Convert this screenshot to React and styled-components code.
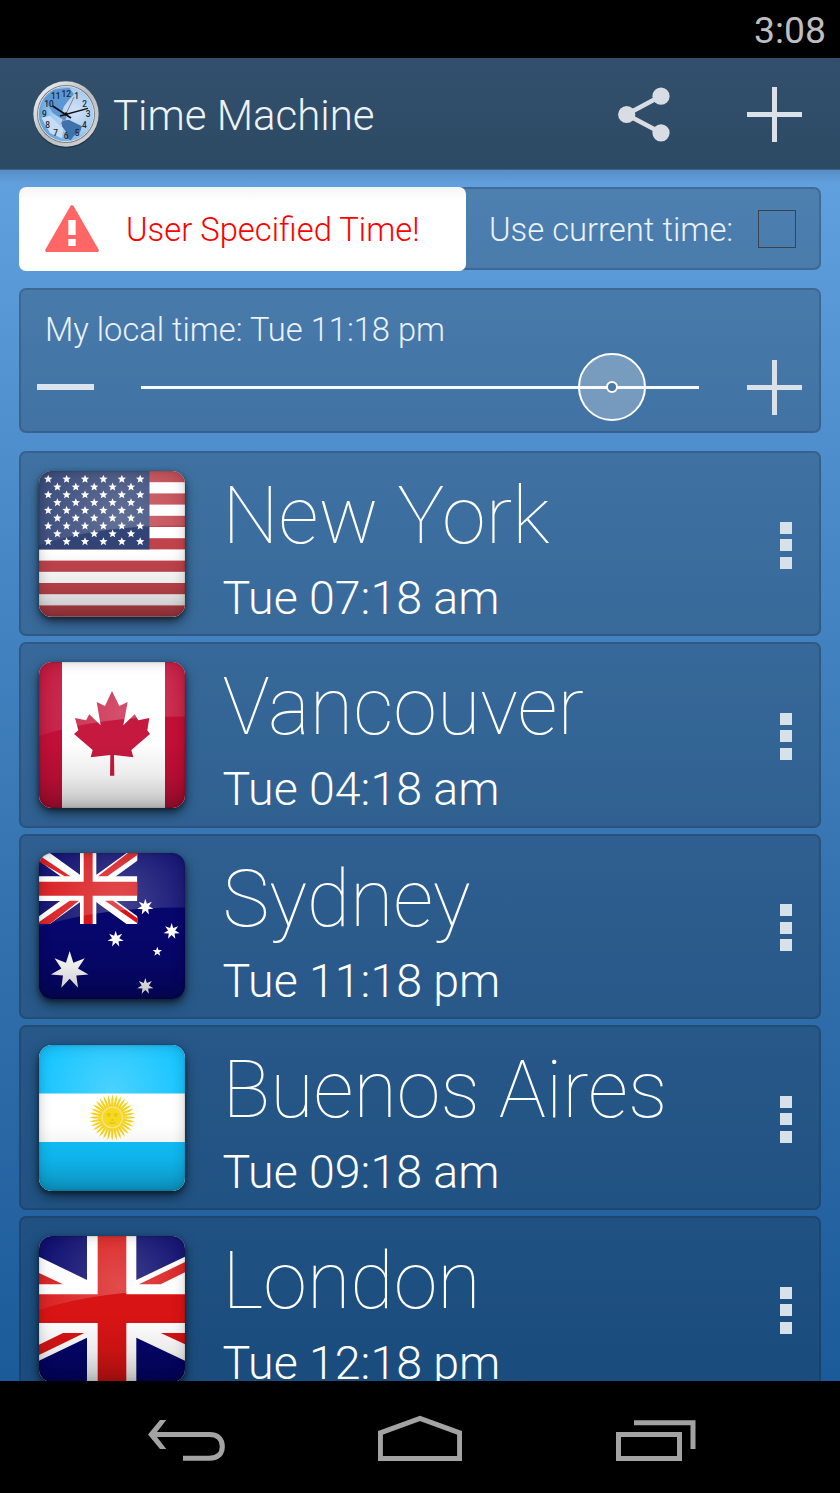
import { useState } from 'react';
import styled, { createGlobalStyle } from 'styled-components';

const GlobalStyle = createGlobalStyle`
    *, *::after {
        box-sizing: border-box;
    }
    body {
        margin: 0;
        background: #000;
    }
`

const Screen = styled.div`
    width: 840px;
    height: 1493px;
    display: flex;
    flex-direction: column;
    overflow: hidden;
    background: #000;
    color: #fff;
    font-family: Roboto, "Liberation Sans", sans-serif;
    font-weight: 300;
`

const StatusBar = styled.div`
    flex: none;
    height: 58px;
    display: flex;
    justify-content: flex-end;
    align-items: center;
    padding: 2px 14px 0 0;
    font-size: 37.3px;
    font-weight: 400;
    color: #bebebe;
`

const ActionBar = styled.header`
    flex: none;
    height: 112px;
    display: flex;
    align-items: center;
    padding: 2px 38px 0 32px;
    background: linear-gradient(#32506d, #2d4a64);
    border-bottom: 1px solid #3f6181;
`

const Title = styled.h1`
    flex: 1;
    margin: 0;
    padding: 3px 0 0 13px;
    font-size: 42px;
    font-weight: 300;
    line-height: 50px;
    color: #eef2f5;
`

const IconButton = styled.button`
    display: flex;
    padding: 0;
    border: 0;
    background: none;
    cursor: pointer;
    margin-right: ${props => props.$gap || 0}px;
`

const Content = styled.main`
    flex: none;
    height: 1211px;
    display: flex;
    flex-direction: column;
    padding: 17px 19px 0;
    overflow: hidden;
    background:
        linear-gradient(rgba(0, 0, 0, 0.12), rgba(0, 0, 0, 0) 14px),
        linear-gradient(#62a1df 0%, #4b8bc9 27%, #3370ae 62%, #1c5b9a 100%);
`

const Panel = styled.section`
    flex: none;
    background: rgba(20, 30, 40, 0.25);
    border: 2px solid rgba(20, 30, 40, 0.2);
    border-radius: 7px;
`

const ModePanel = styled(Panel)`
    height: 83px;
    display: flex;
    align-items: center;
    margin-bottom: 18px;
`

const Warning = styled.div`
    flex: none;
    width: 447px;
    height: 84px;
    margin-left: -2px;
    display: flex;
    align-items: center;
    gap: 27px;
    padding-left: 26px;
    border-radius: 7px;
    background: linear-gradient(#f5f5f5, #fff 14px);
    color: #f00;
    font-size: 32.8px;
`

const WarningText = styled.span`
    padding-top: 2px;
`

const CurrentLabel = styled.label`
    flex: 1;
    display: flex;
    align-items: center;
    justify-content: space-between;
    padding: 2px 23px 0 23px;
    font-size: 32.8px;
    color: #eaf1f8;
`

const CheckBox = styled.span`
    width: 38px;
    height: 38px;
    margin-top: -2px;
    border: 1.5px solid #3b444d;
`

const TimePanel = styled(Panel)`
    height: 145px;
    margin-bottom: 18px;
    padding: 20px 17px 0 16px;
`

const LocalTime = styled.div`
    padding-left: 8px;
    font-size: 32.67px;
    line-height: 40px;
    color: #eaf1f8;
`

const SliderRow = styled.div`
    display: flex;
    align-items: center;
    height: 56px;
    margin-top: 9px;
`

const Minus = styled.span`
    width: 57px;
    height: 6px;
    background: #dbe4ee;
`

const Track = styled.div`
    position: relative;
    width: 558px;
    height: 3px;
    margin: 0 48px 0 47px;
    background: #f6f9fc;
`

const Thumb = styled.div`
    position: absolute;
    top: 50%;
    width: 68px;
    height: 68px;
    transform: translate(-50%, -50%);
    display: flex;
    align-items: center;
    justify-content: center;
    border: 2.4px solid #fff;
    border-radius: 50%;
    background: rgba(255, 255, 255, 0.28);

    &::after {
        content: '';
        width: 12px;
        height: 12px;
        border: 2.6px solid #fff;
        border-radius: 50%;
        background: #4c79a6;
    }
`

const CityCard = styled(Panel)`
    height: 185.3px;
    display: flex;
    align-items: center;
    margin-bottom: 6px;
    padding: 0 27px 0 18px;
`

const FlagBox = styled.div`
    position: relative;
    flex: none;
    width: 146px;
    height: 146px;
    overflow: hidden;
    border-radius: 13px;

    svg {
        display: block;
    }

    /* vignette on the rim and dark bottom edge */
    &::after {
        content: '';
        position: absolute;
        inset: 0;
        border-radius: 13px;
        background: linear-gradient(rgba(0, 0, 0, 0) 55%, rgba(0, 0, 0, 0.08) 78%, rgba(0, 0, 0, 0.25));
        box-shadow: inset 0 0 14px rgba(0, 0, 0, 0.2), inset 0 0 2px rgba(0, 0, 0, 0.3);
    }
`

const FlagShadow = styled.div`
    border-radius: 13px;
    box-shadow: 0 5px 12px rgba(0, 0, 0, 0.55), 0 2px 4px rgba(0, 0, 0, 0.4);
`

const CityText = styled.div`
    flex: 1;
    padding: 16px 0 0 37.5px;
`

const CityName = styled.div`
    font-size: 79.2px;
    font-weight: 100;
    line-height: 88px;
    white-space: nowrap;
`

const CityTime = styled.div`
    margin-top: 5px;
    font-size: 46.5px;
    line-height: 66px;
    white-space: nowrap;
`

const MenuDots = styled.button`
    display: flex;
    flex-direction: column;
    gap: 5.5px;
    margin-top: 3px;
    padding: 0;
    border: 0;
    background: none;
    cursor: pointer;
`

const Dot = styled.span`
    width: 12px;
    height: 12px;
    background: #d7e1ea;
`

const NavBar = styled.nav`
    flex: none;
    height: 112px;
    display: flex;
    justify-content: space-between;
    padding: 33px 144px 0 146px;
`

const starPoints = (cx, cy, r, n, ratio) => {
    const points = [];
    for (let i = 0; i < n * 2; i++) {
        const radius = i % 2 ? r * ratio : r;
        const angle = (Math.PI * i) / n - Math.PI / 2;
        points.push(`${(cx + radius * Math.cos(angle)).toFixed(2)},${(cy + radius * Math.sin(angle)).toFixed(2)}`);
    }
    return points.join(' ');
};

const Gloss = ({ id }) => (
    <>
        <defs>
            <radialGradient id={id} gradientUnits="userSpaceOnUse" cx="80" cy="50" r="85">
                <stop offset="0" stopColor="#fff" stopOpacity="0.24" />
                <stop offset="1" stopColor="#fff" stopOpacity="0.05" />
            </radialGradient>
        </defs>
        <path d="M0 0H146V54.500Q60 54 0 74Z" fill={`url(#${id})`} />
    </>
);

const UsaFlag = () => {
    const stripes = [0, 2, 4, 6, 8, 10, 12];
    const stars = [];
    for (let row = 0; row < 9; row++) {
        const count = row % 2 ? 5 : 6;
        for (let col = 0; col < count; col++) {
            stars.push([9.2 + col * 18.4 + (row % 2 ? 9.2 : 0), 8.2 + row * 7.8]);
        }
    }
    return (
        <svg width="146" height="146">
            <rect width="146" height="146" fill="#fff" />
            {stripes.map(i => <rect key={i} y={i * 11.2} width="146" height="11.2" fill="#c0434c" />)}
            <rect width="110.500" height="78.400" fill="#324476" />
            {stars.map(([x, y]) => <polygon key={`${x}-${y}`} points={starPoints(x, y, 4.4, 5, 0.45)} fill="#fff" />)}
            <Gloss id="glossUsa" />
        </svg>
    );
};

const CanadaFlag = () => (
    <svg width="146" height="146">
        <rect width="146" height="146" fill="#fff" />
        <rect width="23" height="146" fill="#c20f37" />
        <rect x="126" width="20" height="146" fill="#c20f37" />
        <polygon
            transform="scale(0.3333) translate(-88 -66)"
            fill="#c6193f"
            points="307,153 329,198 354,186 341,256 375,223 386,241 419,234 413,271 421,282 365,330 371,352 313,345 314,407 301,407 302,345 243,352 249,330 193,282 206,271 196,234 229,241 239,223 273,256 261,186 286,198"
        />
        <Gloss id="glossCanada" />
    </svg>
);

const AustraliaFlag = () => (
    <svg width="146" height="146">
        <defs>
            <clipPath id="canton"><rect x="88" y="64" width="295" height="213" /></clipPath>
        </defs>
        <rect width="146" height="146" fill="#06066c" />
        <g transform="scale(0.3333) translate(-88 -64)">
            <g clipPath="url(#canton)">
                <path d="M88 64L383 277M383 64L88 277" stroke="#fff" strokeWidth="38" />
                <path d="M211 64h49v70h123v74H260v69h-49v-69H88v-74h123z" fill="#fff" />
                <g fill="#d81418">
                    <polygon points="88,72 96,76 182,134 165,134 88,90" />
                    <polygon points="355,64 383,64 383,70 293,134 265,134" />
                    <polygon points="88,277 88,271 180,207 208,207 120,277" />
                    <polygon points="286,207 310,207 383,260 383,275" />
                    <path d="M222 64h27v86h134v42H249v85h-27v-85H88v-42h134z" />
                </g>
            </g>
            <g fill="#fff">
                <polygon points={starPoints(180, 416, 58, 7, 0.44)} />
                <polygon points={starPoints(407, 226, 25, 7, 0.44)} />
                <polygon points={starPoints(486, 299, 25, 7, 0.44)} />
                <polygon points={starPoints(318, 322, 25, 7, 0.44)} />
                <polygon points={starPoints(407, 464, 25, 7, 0.44)} />
                <polygon points={starPoints(443, 360, 15, 5, 0.42)} />
            </g>
        </g>
        <Gloss id="glossAustralia" />
    </svg>
);

const ArgentinaFlag = () => {
    const rays = Array.from({ length: 32 }, (_, i) => i * 11.25);
    return (
        <svg width="146" height="146">
            <defs>
                <radialGradient id="sky" gradientUnits="userSpaceOnUse" cx="73" cy="46" r="75">
                    <stop offset="0" stopColor="#4ad2ff" />
                    <stop offset="1" stopColor="#18c5ff" />
                </radialGradient>
            </defs>
            <rect width="146" height="146" fill="#fff" />
            <rect width="146" height="48.500" fill="url(#sky)" />
            <rect y="97" width="146" height="49" fill="#10c2fd" />
            <g transform="translate(73.300 72.500)">
                {rays.map(a => (
                    <path key={a} d="M-1.300 -10L-0.900 -19L0.200 -23.300L1 -19L1.300 -10Z" fill="#f6d21c" transform={`rotate(${a})`} />
                ))}
                <circle r="10.300" fill="#f8d91e" stroke="#f3e48c" strokeWidth="1.300" />
                <path d="M-5.500 -3Q-3.500 -4.500 -1.500 -3M1.500 -3Q3.500 -4.500 5.500 -3M-4.800 -1.500h2.600M2.200 -1.500h2.600M-1.500 2.500h3M-3 5Q0 7 3 5" fill="none" stroke="#d3ad18" strokeWidth="0.800" />
            </g>
        </svg>
    );
};

const UkFlag = () => (
    <svg width="146" height="146">
        <rect width="146" height="146" fill="#fff" />
        <g transform="scale(0.3333) translate(-88 -66)">
            <g fill="#04046a">
                <polygon points="88,66 232,66 232,198 88,128" />
                <polygon points="380,66 526,66 526,128 380,198" />
                <polygon points="88,440 232,371 232,504 88,504" />
                <polygon points="380,371 526,440 526,504 380,504" />
            </g>
            <g fill="#d81414">
                <polygon points="88,177 160,211 88,211" />
                <polygon points="526,144 526,175 453,211 388,211" />
                <polygon points="88,423 88,392 160,357 224,357" />
                <polygon points="453,357 526,357 526,391" />
                <path d="M264 66h86v175h176v86H350v177h-86V327H88v-86h176z" />
            </g>
        </g>
        <Gloss id="glossUk" />
    </svg>
);

const clockNumbers = [
    ['12', 199, 289], ['1', 230, 296], ['2', 254, 319], ['3', 264, 351],
    ['4', 253, 383], ['5', 231, 406], ['6', 198, 417], ['7', 167, 406],
    ['8', 143, 383], ['9', 133, 351], ['10', 147, 320], ['11', 167, 297],
];

const ClockLogo = () => (
    <svg width="68" height="70" viewBox="96 239 204 210">
        <defs>
            <linearGradient id="rim" x1="0" y1="0" x2="1" y2="1">
                <stop offset="0" stopColor="#fafafa" />
                <stop offset="0.500" stopColor="#b9bcc0" />
                <stop offset="1" stopColor="#d8d8d8" />
            </linearGradient>
            <radialGradient id="face" cx="0.650" cy="0.450" r="0.650">
                <stop offset="0" stopColor="#d3e2f7" />
                <stop offset="0.600" stopColor="#a5cbf0" />
                <stop offset="1" stopColor="#5b9fe0" />
            </radialGradient>
        </defs>
        <circle cx="198" cy="347" r="97" fill="#000" opacity="0.300" />
        <circle cx="198" cy="341" r="98" fill="url(#rim)" />
        <circle cx="198" cy="341" r="87" fill="#77797d" />
        <circle cx="198" cy="341" r="83" fill="url(#face)" stroke="#d4dce6" strokeWidth="3" />
        <path d="M132 296L160 268L208 262L222 282L206 300L192 318L186 336L200 350L196 362L176 350L158 338L146 318Z" fill="#5b97d2" />
        <path d="M124 352L150 346L172 368L190 384L186 414L150 398Z" fill="#c6dcf4" />
        <path d="M186 362L206 358L246 378L240 396L222 406L212 420L200 414L198 394L186 378Z" fill="#3f72aa" />
        <g fill="#1c2733" fontFamily="Roboto, sans-serif" fontWeight="500" fontSize="25" textAnchor="middle">
            {clockNumbers.map(([label, x, y]) => <text key={label} x={x} y={y}>{label}</text>)}
        </g>
        <path d="M183 372L222 290" stroke="#8b7f92" strokeWidth="3" />
        <path d="M213 353L158 317" stroke="#0b1016" strokeWidth="5" />
        <path d="M180 347L264 324" stroke="#0b1016" strokeWidth="4" />
        <circle cx="198" cy="341" r="5" fill="#0b1016" />
    </svg>
);

const ShareIcon = () => (
    <svg width="54" height="56" viewBox="0 0 54 56">
        <path d="M44 9L9.500 27.500L44 45.800" fill="none" stroke="#d8dde4" strokeWidth="4.600" />
        <circle cx="9.700" cy="27.500" r="8.600" fill="#d8dde4" />
        <circle cx="44" cy="9.200" r="8.600" fill="#d8dde4" />
        <circle cx="44" cy="45.800" r="8.600" fill="#d8dde4" />
    </svg>
);

const PlusIcon = () => (
    <svg width="55" height="55" viewBox="0 0 55 55">
        <path d="M0 27.500H55M27.500 0V55" stroke="#dbe1e9" strokeWidth="5" />
    </svg>
);

const WarningIcon = () => (
    <svg width="54" height="47" viewBox="136 75 162 141">
        <polygon points="217,81 292,211 142,211" fill="#ff6666" stroke="#ff6666" strokeWidth="11" strokeLinejoin="round" />
        <path d="M206 120h22v45h-22zM206 177h22v21h-22z" fill="#fff" />
    </svg>
);

const BackIcon = () => (
    <svg width="79" height="50" viewBox="146 1414 79 50" fill="none" stroke="#a3a3a3">
        <path d="M150 1434.500H209.500C218.500 1434.500 222.300 1439.500 222.300 1446.500S218.500 1458.200 209.500 1458.200H183" strokeWidth="5" />
        <path d="M160 1420H166.300L155 1434.500L166.300 1449H160L148 1434.500Z" fill="#a3a3a3" stroke="none" />
    </svg>
);

const HomeIcon = () => (
    <svg width="84" height="50" viewBox="378 1414 84 50">
        <path d="M380.400 1458.500V1432.800L420 1418.300L459.600 1432.800V1458.500Z" fill="none" stroke="#a3a3a3" strokeWidth="5" />
    </svg>
);

const RecentIcon = () => (
    <svg width="81" height="50" viewBox="615 1414 81 50">
        <g fill="none" stroke="#a3a3a3" strokeWidth="5">
            <rect x="618.500" y="1434.500" width="61" height="24" />
            <path d="M634 1422.800H693V1449" />
        </g>
    </svg>
);

const cities = [
    { name: 'New York', time: 'Tue 07:18 am', Flag: UsaFlag },
    { name: 'Vancouver', time: 'Tue 04:18 am', Flag: CanadaFlag },
    { name: 'Sydney', time: 'Tue 11:18 pm', Flag: AustraliaFlag },
    { name: 'Buenos Aires', time: 'Tue 09:18 am', Flag: ArgentinaFlag },
    { name: 'London', time: 'Tue 12:18 pm', Flag: UkFlag },
];

const App = () => {

    const [position] = useState(471)

    return (
        <Screen>
            <GlobalStyle />
            <StatusBar>3:08</StatusBar>
            <ActionBar>
                <ClockLogo />
                <Title>Time Machine</Title>
                <IconButton $gap={76} aria-label="Share"><ShareIcon /></IconButton>
                <IconButton aria-label="Add city"><PlusIcon /></IconButton>
            </ActionBar>
            <Content>
                <ModePanel>
                    <Warning>
                        <WarningIcon />
                        <WarningText>User Specified Time!</WarningText>
                    </Warning>
                    <CurrentLabel>
                        Use current time:
                        <CheckBox />
                    </CurrentLabel>
                </ModePanel>
                <TimePanel>
                    <LocalTime>My local time: Tue 11:18 pm</LocalTime>
                    <SliderRow>
                        <Minus />
                        <Track>
                            <Thumb style={{ left: position }} />
                        </Track>
                        <IconButton aria-label="Later"><PlusIcon /></IconButton>
                    </SliderRow>
                </TimePanel>
                {cities.map(({ name, time, Flag }) => (
                    <CityCard key={name}>
                        <FlagShadow>
                            <FlagBox><Flag /></FlagBox>
                        </FlagShadow>
                        <CityText>
                            <CityName>{name}</CityName>
                            <CityTime>{time}</CityTime>
                        </CityText>
                        <MenuDots aria-label="Options">
                            <Dot />
                            <Dot />
                            <Dot />
                        </MenuDots>
                    </CityCard>
                ))}
            </Content>
            <NavBar>
                <BackIcon />
                <HomeIcon />
                <RecentIcon />
            </NavBar>
        </Screen>
    )
}

export default App;
